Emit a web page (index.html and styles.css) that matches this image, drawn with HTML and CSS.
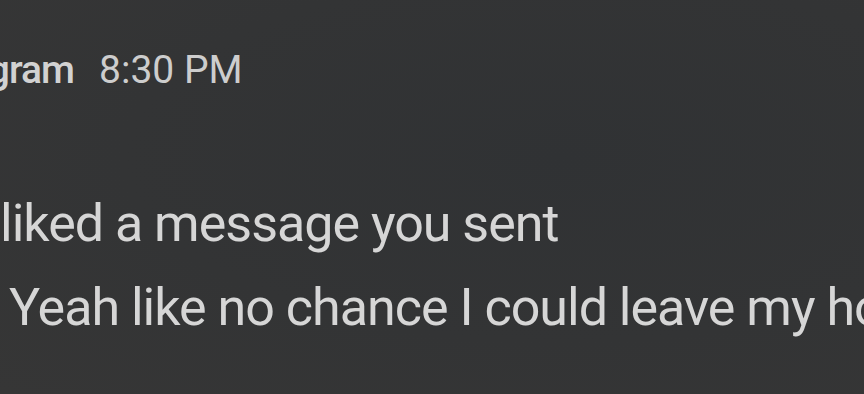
FILE: index.html
```html
<!DOCTYPE html>
<html lang="en">
<head>
    <meta charset="UTF-8">
    <meta name="viewport" content="width=device-width, initial-scale=1.0">
    <title>Notification</title>
    <link rel="stylesheet" href="styles.css">
</head>
<body>
    <div class="notification">
        <div class="header">
            <span class="app-name">Instagram</span>
            <span class="time">8:30 PM</span>
        </div>
        <div class="title">liked a message you sent</div>
        <div class="message">Yeah like no chance I could leave my house</div>
    </div>
</body>
</html>
```

FILE: styles.css
```css
body {
    margin: 0;
    width: 864px;
    height: 394px;
    overflow: hidden;
    font-family: Roboto, 'Noto Sans', sans-serif;
    background: radial-gradient(ellipse at 65% 40%, #303234 0%, #333435 55%, #363636 100%);
    color: #d6d6d6;
}

.notification {
    width: 864px;
    overflow: hidden;
    white-space: nowrap;
}

.header {
    display: flex;
    align-items: baseline;
    gap: 25px;
    margin-top: 47px;
    margin-left: -94px;
    font-size: 39px;
    line-height: 46px;
}

.app-name {
    font-weight: 500;
    letter-spacing: -1px;
    color: #d2d2d2;
}

.time {
    color: #cdcdcd;
}

.title {
    margin-top: 89px;
    font-size: 52px;
    line-height: 84px;
    letter-spacing: -1px;
}

.message {
    padding-left: 9px;
    font-size: 52px;
    line-height: 84px;
    letter-spacing: -1px;
}
```
